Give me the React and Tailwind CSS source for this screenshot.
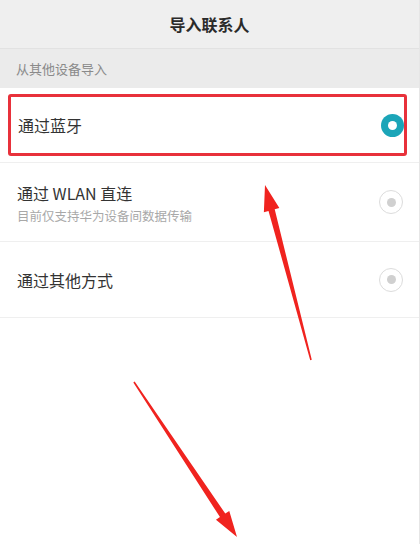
import React from 'react'

const font = { fontFamily: '"Noto Sans CJK SC", "Noto Sans", sans-serif' }

function arrowPoints(tx, ty, px, py) {
  const len = Math.hypot(px - tx, py - ty)
  const dx = (px - tx) / len
  const dy = (py - ty) / len
  const nx = -dy
  const ny = dx
  const headLen = 26
  const headW = 8
  const neckW = 3.2
  const tailW = 0.8
  const bx = px - dx * headLen
  const by = py - dy * headLen
  const pts = [
    [tx + nx * tailW, ty + ny * tailW],
    [bx + nx * neckW, by + ny * neckW],
    [bx + nx * headW, by + ny * headW],
    [px, py],
    [bx - nx * headW, by - ny * headW],
    [bx - nx * neckW, by - ny * neckW],
    [tx - nx * tailW, ty - ny * tailW],
  ]
  return pts.map((p) => p.join(',')).join(' ')
}

function Radio({ on }) {
  if (on) {
    return (
      <div className="w-[23px] h-[23px] rounded-full bg-[#1ba5b8] grid place-items-center">
        <div className="w-[9px] h-[9px] rounded-full bg-white" />
      </div>
    )
  }
  return (
    <div className="w-[24px] h-[24px] rounded-full border-[1.5px] border-[#dcdcdc] grid place-items-center">
      <div className="w-[9px] h-[9px] rounded-full bg-[#d0d0d0]" />
    </div>
  )
}

export default function App() {
  return (
    <div className="relative w-[420px] h-[544px] bg-white overflow-hidden border-r border-[#e6e6e6]" style={font}>
      <div className="h-[49px] bg-[#efefef] border-b border-[#e2e2e2] flex items-center justify-center">
        <span className="text-[16px] font-bold text-[#2a2a2a]">导入联系人</span>
      </div>
      <div className="h-[39px] bg-[#ebebeb] flex items-center px-4">
        <span className="text-[13px] text-[#8a8a8a]">从其他设备导入</span>
      </div>

      <div className="h-[75px] pl-2 pr-3 py-[6px] border-b border-[#efefef]">
        <div className="h-full border-[3px] border-[#e8313b] rounded-[3px] flex items-center justify-between pl-[7px] pr-0">
          <span className="text-[16px] text-[#333]">通过蓝牙</span>
          <Radio on />
        </div>
      </div>

      <div className="h-[79px] flex items-center justify-between pl-[17px] pr-[16px] border-b border-[#efefef]">
        <div className="flex flex-col pt-[4px]">
          <span className="text-[16px] text-[#333] leading-[24px]">通过 WLAN 直连</span>
          <span className="text-[12.5px] text-[#a8a8a8] leading-[22px]">目前仅支持华为设备间数据传输</span>
        </div>
        <Radio />
      </div>

      <div className="h-[76px] flex items-center justify-between pl-[17px] pr-[16px] border-b border-[#efefef]">
        <span className="text-[16px] text-[#333]">通过其他方式</span>
        <Radio />
      </div>

      <svg className="absolute inset-0 pointer-events-none" width="420" height="544">
        <polygon points={arrowPoints(311, 360, 265, 185)} fill="#f0231f" />
        <polygon points={arrowPoints(134, 382, 237, 537)} fill="#f0231f" />
      </svg>
    </div>
  )
}
